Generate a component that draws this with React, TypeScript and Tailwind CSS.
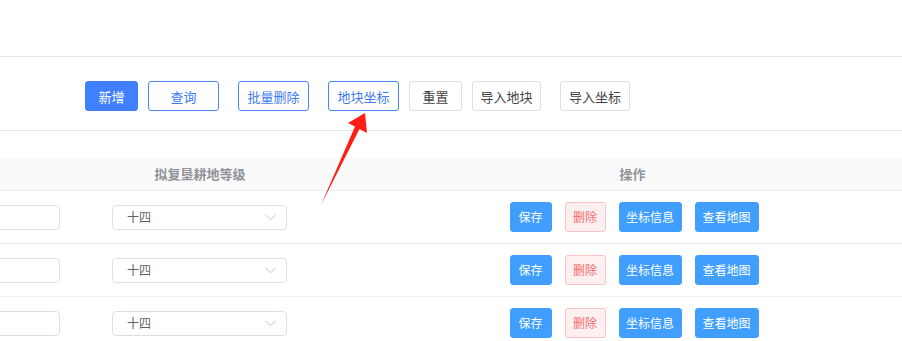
import React from "react";

const font = { fontFamily: '"Noto Sans CJK SC", "Liberation Sans", sans-serif' };

const rows = [1, 2, 3];

const ToolbarButton = ({
  label,
  kind,
  className = "",
}: {
  label: string;
  kind: "primary" | "outline" | "plain";
  className?: string;
}) => {
  const styles =
    kind === "primary"
      ? "bg-[#4080ff] border-[#4080ff] text-white"
      : kind === "outline"
      ? "bg-white border-[#4a86f7] text-[#3f7bf0]"
      : "bg-white border-[#dcdfe6] text-[#444444]";
  return (
    <button
      className={`h-[30px] rounded-[3px] border text-[13px] leading-none flex items-center justify-center shrink-0 ${styles} ${className}`}
    >
      {label}
    </button>
  );
};

const ActionButton = ({ label, danger, w }: { label: string; danger?: boolean; w: string }) => (
  <button
    className={`h-[30px] ${w} rounded-[3px] border text-[12px] leading-none flex items-center justify-center shrink-0 ${
      danger
        ? "bg-[#fef0f0] border-[#fbc4c4] text-[#f56c6c]"
        : "bg-[#409eff] border-[#409eff] text-white"
    }`}
  >
    {label}
  </button>
);

export default function App() {
  return (
    <div className="relative w-[902px] h-[341px] overflow-hidden bg-white" style={font}>
      {/* top bar */}
      <div className="h-[57px] border-b border-[#e4e4e4]" />

      {/* toolbar */}
      <div className="h-[74px] border-b border-[#e4e4e4] flex items-center pl-[85px] pt-[5px]">
        <ToolbarButton label="新增" kind="primary" className="w-[53px]" />
        <ToolbarButton label="查询" kind="outline" className="w-[71px] ml-[10px]" />
        <ToolbarButton label="批量删除" kind="outline" className="w-[71px] ml-[19px]" />
        <ToolbarButton label="地块坐标" kind="outline" className="w-[71px] ml-[19px]" />
        <ToolbarButton label="重置" kind="plain" className="w-[53px] ml-[10px]" />
        <ToolbarButton label="导入地块" kind="plain" className="w-[69px] ml-[10px]" />
        <ToolbarButton label="导入坐标" kind="plain" className="w-[70px] ml-[19px]" />
      </div>

      {/* table */}
      <div className="mt-[27px]">
        <div className="grid grid-cols-[100px_200px_63px_1fr] h-[33px] bg-[#fafafa] border-b border-[#ebeef5] text-[13px] font-bold text-[#909399]">
          <div />
          <div className="flex items-center justify-center">拟复垦耕地等级</div>
          <div />
          <div className="flex items-center justify-center">操作</div>
        </div>
        {rows.map((r) => (
          <div
            key={r}
            className="grid grid-cols-[100px_200px_63px_1fr] h-[53px] border-b border-[#ebeef5]"
          >
            <div className="flex items-center justify-end pr-[40px]">
              <div className="w-[120px] h-[25px] shrink-0 rounded-[4px] border border-[#dcdfe6] bg-white" />
            </div>
            <div className="flex items-center justify-center pr-[1px]">
              <div className="w-[175px] h-[25px] rounded-[4px] border border-[#dcdfe6] bg-white flex items-center pl-[14px] pr-[10px] text-[12px] text-[#606266]">
                <span className="flex-1">十四</span>
                <svg width="11" height="7" viewBox="0 0 11 7" fill="none">
                  <path d="M0.5 0.8 L5.5 5.8 L10.5 0.8" stroke="#c0c4cc" strokeWidth="1" />
                </svg>
              </div>
            </div>
            <div />
            <div className="flex items-center justify-center gap-[13px] pl-[3px]">
              <ActionButton label="保存" w="w-[42px]" />
              <ActionButton label="删除" danger w="w-[41px]" />
              <ActionButton label="坐标信息" w="w-[63px]" />
              <ActionButton label="查看地图" w="w-[64px]" />
            </div>
          </div>
        ))}
      </div>

      {/* annotation arrow */}
      <svg
        className="absolute left-0 top-0 pointer-events-none"
        width="902"
        height="341"
        viewBox="0 0 902 341"
      >
        <polygon
          points="365,113 367,133 359.5,129 321,205 355,126.5 348,123"
          fill="#ff1f14"
        />
      </svg>
    </div>
  );
}
